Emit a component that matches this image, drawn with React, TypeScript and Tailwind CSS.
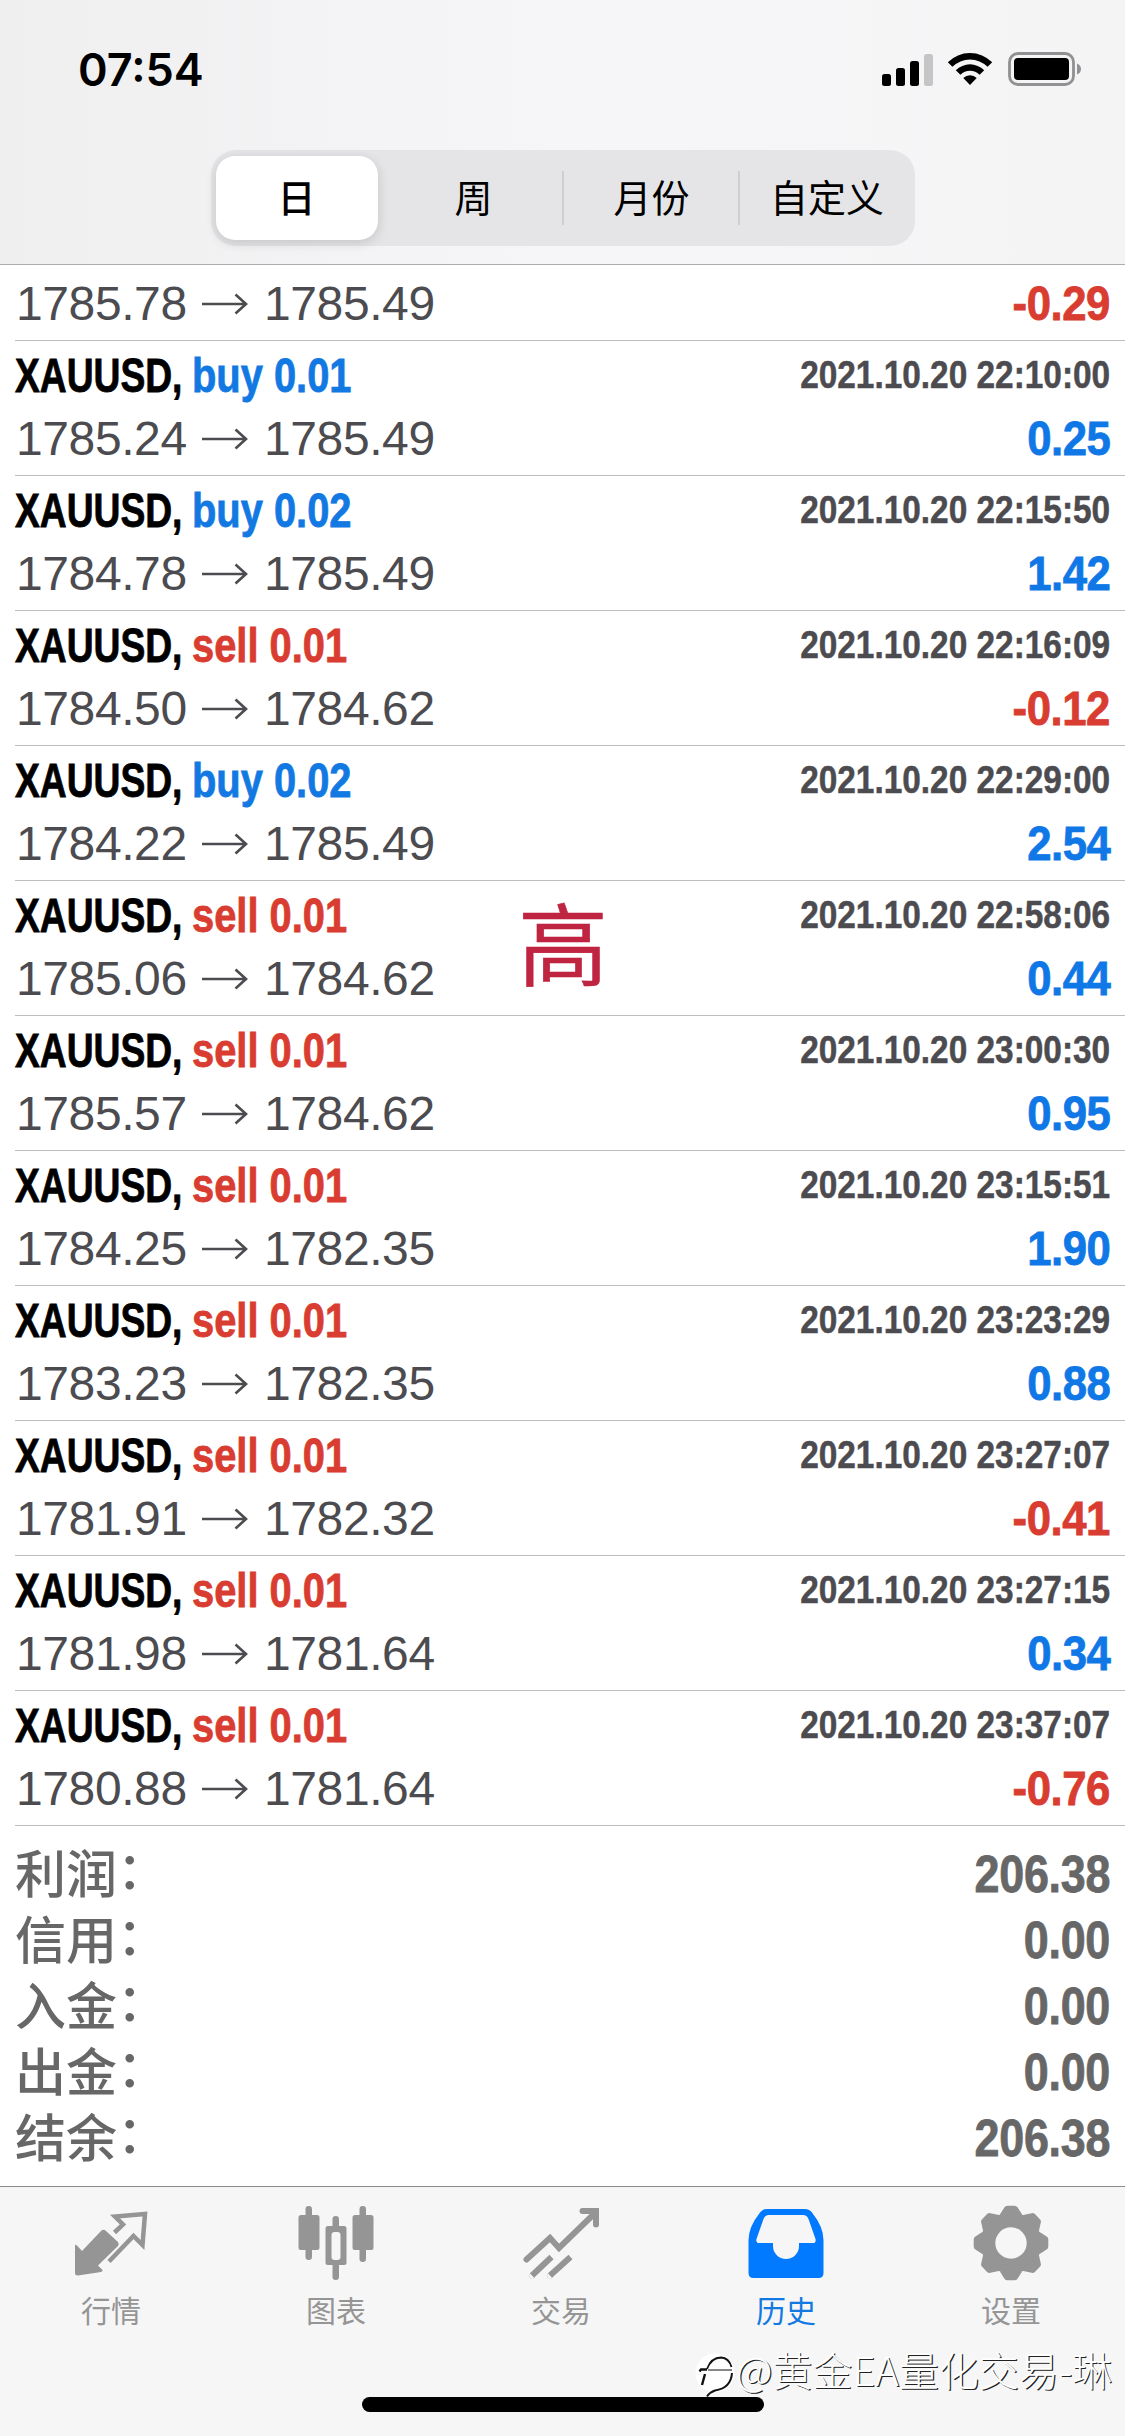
import React from "react";

type Side = "buy" | "sell";
type Deal = { side: Side; lot: string; time: string; from: string; to: string; profit: string };

const deals: Deal[] = [
  { side: "buy", lot: "0.01", time: "2021.10.20 22:10:00", from: "1785.24", to: "1785.49", profit: "0.25" },
  { side: "buy", lot: "0.02", time: "2021.10.20 22:15:50", from: "1784.78", to: "1785.49", profit: "1.42" },
  { side: "sell", lot: "0.01", time: "2021.10.20 22:16:09", from: "1784.50", to: "1784.62", profit: "-0.12" },
  { side: "buy", lot: "0.02", time: "2021.10.20 22:29:00", from: "1784.22", to: "1785.49", profit: "2.54" },
  { side: "sell", lot: "0.01", time: "2021.10.20 22:58:06", from: "1785.06", to: "1784.62", profit: "0.44" },
  { side: "sell", lot: "0.01", time: "2021.10.20 23:00:30", from: "1785.57", to: "1784.62", profit: "0.95" },
  { side: "sell", lot: "0.01", time: "2021.10.20 23:15:51", from: "1784.25", to: "1782.35", profit: "1.90" },
  { side: "sell", lot: "0.01", time: "2021.10.20 23:23:29", from: "1783.23", to: "1782.35", profit: "0.88" },
  { side: "sell", lot: "0.01", time: "2021.10.20 23:27:07", from: "1781.91", to: "1782.32", profit: "-0.41" },
  { side: "sell", lot: "0.01", time: "2021.10.20 23:27:15", from: "1781.98", to: "1781.64", profit: "0.34" },
  { side: "sell", lot: "0.01", time: "2021.10.20 23:37:07", from: "1780.88", to: "1781.64", profit: "-0.76" },
];

const totals: [string, string][] = [
  ["利润", "206.38"],
  ["信用", "0.00"],
  ["入金", "0.00"],
  ["出金", "0.00"],
  ["结余", "206.38"],
];

function StatusBar() {
  return (
    <div className="flex h-[138px] items-center justify-between pl-[78px] pr-[43px]">
      <span className="font-['Inter',sans-serif] text-[45px] font-semibold leading-none text-black">07:54</span>
      <div className="flex items-center">
        <svg width="51" height="33" viewBox="0 0 51 33">
          <rect x="0" y="21" width="9" height="12" rx="2.5" />
          <rect x="14" y="15" width="9" height="18" rx="2.5" />
          <rect x="28" y="8" width="9" height="25" rx="2.5" />
          <rect x="42" y="1" width="9" height="32" rx="2.5" fill="#c5c5c7" />
        </svg>
        <svg className="ml-[14px]" width="46" height="34" viewBox="0 0 46 34">
          <path d="M.8 10.2a31.5 31.5 0 0 1 44.4 0l-4.6 4.6a25 25 0 0 0-35.2 0z" />
          <path d="M8.8 18.2a20.2 20.2 0 0 1 28.4 0l-4.6 4.6a13.7 13.7 0 0 0-19.2 0z" />
          <path d="M16.3 26a9.5 9.5 0 0 1 13.4 0L23 33z" />
        </svg>
        <svg className="ml-[15px]" width="74" height="34" viewBox="0 0 74 34">
          <rect x="1.5" y="1.5" width="64" height="31" rx="8.5" fill="none" stroke="#919193" strokeWidth="2.8" />
          <rect x="6" y="6" width="55" height="22" rx="4" />
          <path d="M69 11.5q4 1.5 4 5.5t-4 5.5z" fill="#919193" />
        </svg>
      </div>
    </div>
  );
}

function SegmentedControl() {
  return (
    <div className="mx-auto mt-[12px] flex h-[96px] w-[704px] items-center rounded-[25px] bg-[#e5e5e7] font-['Noto_Sans_CJK_SC',sans-serif] text-[38px] leading-none text-black">
      <div className="ml-[5px] mr-[7px] flex h-[84px] w-[162px] items-center justify-center rounded-[19px] bg-white pb-[4px] font-medium shadow-[0_3px_12px_rgba(0,0,0,0.14)]">
        日
      </div>
      <div className="w-[177px] pb-[4px] pl-px text-center">周</div>
      <div className="flex h-[54px] w-[178px] items-center justify-center border-x-2 border-[#cfcfd2] pb-[4px] pl-[2px]">月份</div>
      <div className="w-[175px] pb-[4px] text-center">自定义</div>
    </div>
  );
}

function PriceLine({ from, to, profit }: { from: string; to: string; profit: string }) {
  return (
    <div className="flex h-[62px] items-center justify-between pr-[15px] leading-[62px]">
      <div className="flex items-center font-['Liberation_Sans',sans-serif] text-[48px] tracking-[-0.4px] text-[#4c4b4f]">
        <span className="ml-px w-[186px]">{from}</span>
        <svg width="46" height="22" viewBox="0 0 46 22" fill="none" stroke="#4c4b4f" strokeWidth="2.6">
          <path d="M0 11h44M33.500 1.500L44 11 33.500 20.500" />
        </svg>
        <span className="ml-[16px]">{to}</span>
      </div>
      <span
        className={
          "origin-right scale-x-[.91] font-['Liberation_Sans',sans-serif] text-[48px] font-bold tracking-[-0.5px] [-webkit-text-stroke:0.8px] " +
          (profit.startsWith("-") ? "text-[#d93c30]" : "text-[#0f78e6]")
        }
      >
        {profit}
      </span>
    </div>
  );
}

function DealRow({ deal }: { deal: Deal }) {
  return (
    <div className="ml-[15px] h-[135px] border-b border-[#bdbdbf]">
      <div className="flex h-[67px] items-center justify-between pr-[15px] font-['Liberation_Sans',sans-serif] font-bold leading-[70px]">
        <div className="flex pt-[3px] text-[48px] [-webkit-text-stroke:0.8px]">
          <span className="w-[177px] origin-left scale-x-[.775] whitespace-nowrap text-black">XAUUSD,</span>
          <span
            className={
              "origin-left scale-x-[.83] whitespace-nowrap " +
              (deal.side === "buy" ? "text-[#1279e2]" : "text-[#d93c30]")
            }
          >
            {deal.side} {deal.lot}
          </span>
        </div>
        <span className="origin-right scale-x-[.856] whitespace-nowrap text-[39px] text-[#4c4b4f] [-webkit-text-stroke:0.5px]">
          {deal.time}
        </span>
      </div>
      <PriceLine from={deal.from} to={deal.to} profit={deal.profit} />
    </div>
  );
}

function QuotesIcon() {
  return (
    <svg width="76" height="76" viewBox="0 0 76 76" fill="#959595">
      <path d="M2 41q0-2 2-.5l5 5.500L28 26q2.500-2.500 5 0l12 11q1.500 2 0 4L25 60.500l4.500 4.500q.5 1.500-1.500 2L5 70.500q-3 0-3-2.500z" />
      <path
        d="M41.500 27.500L50 19.500l-8-8L72 9l-2.500 31-9-9L36 56.500"
        fill="none"
        stroke="#959595"
        strokeWidth="4.500"
      />
    </svg>
  );
}

function ChartIcon() {
  return (
    <svg width="76" height="76" viewBox="0 0 76 76" fill="#959595">
      <rect x="7.500" y="1" width="6.500" height="54" rx="3.200" />
      <rect x="0.500" y="10" width="21" height="35" rx="2.500" />
      <rect x="61.500" y="1" width="6.500" height="56" rx="3.200" />
      <rect x="54.500" y="10" width="21" height="35" rx="2.500" />
      <rect x="34.500" y="11" width="6.500" height="64" rx="3.200" />
      <rect x="27.500" y="21" width="21" height="39" rx="2.500" />
      <rect x="33.500" y="27" width="9" height="28" rx="3" fill="#f6f6f6" />
    </svg>
  );
}

function TradeIcon() {
  return (
    <svg width="76" height="76" viewBox="0 0 76 76" fill="none" stroke="#959595" strokeWidth="6" strokeLinecap="round">
      <path d="M3.500 54.500L27 33l9 10L72 8" />
      <path d="M59.500 6h13.500v13.500" />
      <path d="M28.500 52L9 70.500M47.500 52L27 70.500" strokeLinecap="butt" />
      <circle cx="9" cy="70.500" r="0.100" />
      <circle cx="27" cy="70.500" r="0.100" />
    </svg>
  );
}

function HistoryIcon() {
  return (
    <svg width="76" height="76" viewBox="0 0 76 76">
      <path
        d="M19 4h38q4.500 0 7 3.500Q75.500 22 75.500 35v33q0 5-5 5h-65q-5 0-5-5V35Q.5 22 12 7.500 14.500 4 19 4z"
        fill="#017aff"
      />
      <path
        d="M21 10h34q4 0 5.500 4l7 20q1 4-3 4H51v3a13 13 0 0 1-26 0v-3H11.500q-4 0-3-4l7-20q1.500-4 5.500-4z"
        fill="#f6f6f6"
      />
    </svg>
  );
}

function SettingsIcon() {
  const points: string[] = [];
  for (let i = 0; i < 8; i++) {
    for (const [r, offset] of [[27, -19], [34, -6], [34, 6], [27, 19]]) {
      const angle = ((i * 45 + offset) * Math.PI) / 180;
      points.push(`${(38 + r * Math.sin(angle)).toFixed(2)},${(38 - r * Math.cos(angle)).toFixed(2)}`);
    }
  }
  return (
    <svg width="76" height="76" viewBox="0 0 76 76">
      <polygon points={points.join(" ")} fill="#959595" stroke="#959595" strokeWidth="7" strokeLinejoin="round" />
      <circle cx="38" cy="38" r="15.700" fill="#f6f6f6" />
    </svg>
  );
}

const tabs = [
  { label: "行情", icon: <QuotesIcon />, active: false },
  { label: "图表", icon: <ChartIcon />, active: false },
  { label: "交易", icon: <TradeIcon />, active: false },
  { label: "历史", icon: <HistoryIcon />, active: true },
  { label: "设置", icon: <SettingsIcon />, active: false },
];

function Watermark() {
  return (
    <div className="absolute left-[695px] top-[154px] flex items-start">
      <svg className="mt-[12px] shrink-0" width="41" height="46" viewBox="0 0 41 46">
        <circle cx="20" cy="20" r="19.500" fill="#fff" />
        <g fill="none" stroke="#111">
          <path d="M12 16C15 8 20 4.500 26 4.500q8 .5 10.500 9.500" strokeWidth="1.800" />
          <path d="M13 17h24" strokeWidth="1" />
          <path d="M4.500 18.500l1.500-2h6M10 21L7 32" strokeWidth="2.400" />
          <path d="M37 20q-1 15-17 17.500-5 1.500-8 6" strokeWidth="2" />
        </g>
      </svg>
      <span className="whitespace-nowrap font-['Noto_Sans_CJK_SC',sans-serif] text-[40px] font-light leading-[56px] text-white [text-shadow:1.2px_1.2px_0_#222]">
        @黄金EA量化交易-琳
      </span>
    </div>
  );
}

export default function App() {
  return (
    <div className="relative flex h-[2436px] w-[1125px] flex-col overflow-hidden bg-white">
      <header className="h-[265px] shrink-0 border-b border-[#adadaf] bg-linear-to-r from-[#efeff0] via-[#f6f6f8] to-[#f5f4f5]">
        <StatusBar />
        <SegmentedControl />
      </header>

      <main className="relative h-[1921px] shrink-0">
        <div className="ml-[15px] h-[76px] border-b border-[#bdbdbf] pt-[8px]">
          <PriceLine from="1785.78" to="1785.49" profit="-0.29" />
        </div>
        {deals.map((deal) => (
          <DealRow key={deal.time} deal={deal} />
        ))}
        <div className="px-[15px] pt-[16px]">
          {totals.map(([label, value]) => (
            <div key={label} className="flex h-[66px] items-center justify-between text-[#676767]">
              <span className="flex pb-[7px] font-['Noto_Sans_CJK_SC',sans-serif] text-[51px] font-medium leading-[59px]">
                {label}
                <span className="pb-[8px] leading-[51px]">：</span>
              </span>
              <span className="origin-right scale-x-[.88] font-['Liberation_Sans',sans-serif] text-[51px] font-bold leading-[66px] tracking-[-0.3px] [-webkit-text-stroke:0.8px]">
                {value}
              </span>
            </div>
          ))}
        </div>
        <span className="absolute left-[518px] top-[630px] font-['Noto_Sans_CJK_SC',sans-serif] text-[90px] leading-[90px] text-[#bf2440] [-webkit-text-stroke:0.6px]">
          高
        </span>
      </main>

      <footer className="relative h-[250px] shrink-0 border-t border-[#8a8a8c] bg-[#f6f6f6]">
        <nav className="-ml-[1.5px] flex pt-[18px]">
          {tabs.map((tab) => (
            <div key={tab.label} className="flex w-[225px] flex-col items-center">
              {tab.icon}
              <span
                className={
                  "mt-[10px] font-['Noto_Sans_CJK_SC',sans-serif] text-[30px] leading-[36px] " +
                  (tab.active ? "text-[#1279e2]" : "text-[#959595]")
                }
              >
                {tab.label}
              </span>
            </div>
          ))}
        </nav>
        <div className="absolute left-[362px] top-[210px] h-[15px] w-[402px] rounded-full bg-black" />
        <Watermark />
      </footer>
    </div>
  );
}
